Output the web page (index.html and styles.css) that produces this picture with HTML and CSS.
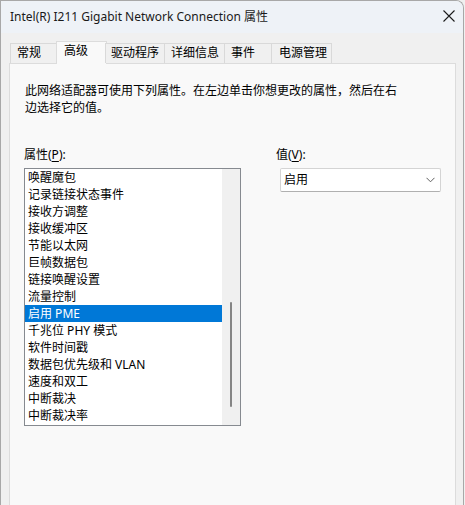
FILE: index.html
```html
<!DOCTYPE html>
<html lang="zh-CN">
<head>
<meta charset="utf-8">
<title>Intel(R) I211 Gigabit Network Connection 属性</title>
<link rel="stylesheet" href="styles.css">
</head>
<body>
<div class="window">
  <div class="titlebar">
    <span class="title">Intel(R) I211 Gigabit Network Connection 属性</span>
    <span class="close">
      <svg width="12" height="12" viewBox="0 0 12 12"><path d="M0.5 0.5 L11.5 11.5 M11.5 0.5 L0.5 11.5" stroke="#1b1b1b" stroke-width="1.1" fill="none"/></svg>
    </span>
  </div>
  <div class="client">
    <div class="tabs">
      <div class="tab t1">常规</div>
      <div class="tab sel t2">高级</div>
      <div class="tab t3">驱动程序</div>
      <div class="tab t4">详细信息</div>
      <div class="tab t5">事件</div>
      <div class="tab t6">电源管理</div>
    </div>
    <div class="panel">
      <p class="desc">此网络适配器可使用下列属性。在左边单击你想更改的属性，然后在右<br>边选择它的值。</p>
      <div class="cols">
        <div class="col-left">
          <div class="label">属性(<u>P</u>):</div>
          <div class="listbox">
            <ul class="items">
              <li>唤醒魔包</li>
              <li>记录链接状态事件</li>
              <li>接收方调整</li>
              <li>接收缓冲区</li>
              <li>节能以太网</li>
              <li>巨帧数据包</li>
              <li>链接唤醒设置</li>
              <li>流量控制</li>
              <li class="selected">启用 PME</li>
              <li>千兆位 PHY 模式</li>
              <li>软件时间戳</li>
              <li>数据包优先级和 VLAN</li>
              <li>速度和双工</li>
              <li>中断裁决</li>
              <li>中断裁决率</li>
            </ul>
            <div class="scrollbar"><div class="thumb"></div></div>
          </div>
        </div>
        <div class="col-right">
          <div class="label">值(<u>V</u>):</div>
          <div class="combo">
            <span>启用</span>
            <svg width="9" height="6" viewBox="0 0 9 6"><path d="M0.5 0.8 L4.5 4.8 L8.5 0.8" stroke="#5f5f5f" stroke-width="1" fill="none"/></svg>
          </div>
        </div>
      </div>
    </div>
  </div>
</div>
</body>
</html>
```
FILE: styles.css
```css
html, body {
  margin: 0;
  padding: 0;
  width: 465px;
  height: 505px;
  overflow: hidden;
  background: #f0f0f0;
}
body {
  font-family: "Noto Sans", "Noto Sans CJK SC", sans-serif;
  font-size: 12px;
  color: #000;
}
.window {
  width: 464px;
  height: 505px;
  box-sizing: border-box;
  border: 1px solid #a8a8a8;
  border-bottom: none;
  border-top-right-radius: 8px;
  background: #f0f0f0;
  overflow: hidden;
  display: flex;
  flex-direction: column;
}
.titlebar {
  height: 32px;
  flex: none;
  background: #eef2f7;
  display: flex;
  align-items: center;
  justify-content: space-between;
  padding: 0 8px 0 9px;
}
.title {
  color: #1a1a1a;
  line-height: 16px;
  padding-bottom: 1px;
}
.close {
  display: flex;
  width: 12px;
  height: 12px;
  margin-right: 0;
  margin-bottom: 2px;
}
.client {
  flex: 1;
  background: #f0f0f0;
  padding: 8px 7px 0 8px;
  display: flex;
  flex-direction: column;
}
.tabs {
  display: flex;
  height: 22px;
  align-items: flex-end;
  padding-left: 1px;
  position: relative;
  z-index: 1;
}
.tab {
  box-sizing: border-box;
  height: 20px;
  border: 1px solid #d9d9d9;
  border-bottom: none;
  background: #f0f0f0;
  padding: 0 0 0 6px;
  line-height: 18px;
  white-space: nowrap;
  margin-right: -1px;
}
.tab.sel {
  height: 23px;
  margin-bottom: -1px;
  background: #f9f9f9;
  border-color: #dcdcdc;
  line-height: 18px;
  padding-left: 7px;
  margin-left: -1px;
  margin-right: -2px;
}
.t1 { width: 48px; }
.t2 { width: 51px; }
.t3 { width: 60px; padding-left: 5px; }
.t4 { width: 61px; }
.t5 { width: 48px; }
.t6 { width: 61px; padding-left: 7px; }
.panel {
  flex: 1;
  background: #f9f9f9;
  border: 1px solid #dcdcdc;
  border-bottom: none;
  padding: 18px 15px 0 15px;
}
.desc {
  margin: 0;
  line-height: 17px;
}
.cols {
  display: flex;
  margin-top: 30px;
}
.col-left {
  width: 217px;
  margin-left: -1px;
}
.col-right {
  margin-left: 35px;
}
.label {
  line-height: 17px;
  height: 17px;
  margin-bottom: 5px;
}
.label u {
  text-underline-offset: 2px;
}
.listbox {
  box-sizing: border-box;
  width: 217px;
  height: 258px;
  border: 1px solid #868a90;
  background: #fff;
  display: flex;
}
.items {
  list-style: none;
  margin: 0;
  padding: 0;
  flex: 1;
}
.items li {
  height: 17px;
  line-height: 17px;
  padding-left: 3px;
  white-space: nowrap;
}
.items li.selected {
  background: #0078d7;
  color: #fff;
}
.scrollbar {
  width: 18px;
  background: #f0f0f0;
  display: flex;
  justify-content: center;
  padding-top: 133px;
}
.thumb {
  width: 2px;
  height: 105px;
  background: #858585;
  border-radius: 1px;
  margin-left: -1px;
}
.combo {
  box-sizing: border-box;
  width: 161px;
  height: 24px;
  margin-left: 4px;
  background: #fff;
  border: 1px solid #d4d4d4;
  border-bottom-color: #b0b0b0;
  border-radius: 2px;
  display: flex;
  align-items: center;
  justify-content: space-between;
  padding: 0 5px 0 3px;
}
.combo span {
  line-height: 16px;
}
```
